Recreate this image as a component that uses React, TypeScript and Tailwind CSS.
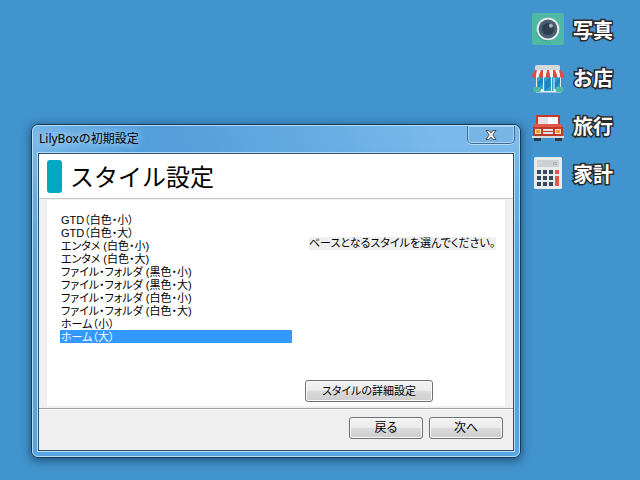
import { useState } from "react";

const styles = [
  "GTD（白色・小）",
  "GTD（白色・大）",
  "エンタメ (白色・小)",
  "エンタメ (白色・大)",
  "ファイル・フォルダ (黒色・小)",
  "ファイル・フォルダ (黒色・大)",
  "ファイル・フォルダ (白色・小)",
  "ファイル・フォルダ (白色・大)",
  "ホーム（小）",
  "ホーム（大）",
];

function CameraIcon() {
  return (
    <svg viewBox="0 0 32 32" className="size-8" aria-hidden="true">
      <rect width="32" height="32" rx="2.500" fill="#4fb9a3" />
      <path d="M4 19a12 12 0 0 0 15 9l-4-11z" fill="#41a38f" />
      <circle cx="16" cy="16" r="11.300" fill="#e9eced" />
      <circle cx="16" cy="16" r="9.400" fill="#4a5f70" />
      <circle cx="16" cy="16" r="6" fill="#2c3e50" />
      <circle cx="18.900" cy="12.700" r="2" fill="#a9b4bd" />
    </svg>
  );
}

function ShopIcon() {
  return (
    <svg viewBox="0 0 32 32" className="size-8" aria-hidden="true">
      <path d="M4 13h25v18.500H4z" fill="#e6e9ea" />
      <path d="M3 9V6q0-2 2-2h21q2 0 2 2v3z" fill="#d3d8db" />
      <path d="M5 15h6v13H5zM12 15h7v15h-7zM20 15h1.500v15H20zM22.500 15H28v13h-5.500z" fill="#2aa1cf" />
      <path d="M13 21l5-5v9l-5 5zM6 21l5-5v6l-5 5zM23 21l5-5v6l-5 5z" fill="#1d83ba" />
      <path d="M3 9h26l2 5H1z" fill="#f2f4f4" />
      <path
        d="M3 9h2l-1 5H0zM9 9h2l0 5H7zM15 9h2l1 5h-4zM21 9h2l2 5h-4zM27 9h2l3 5h-4z"
        fill="#df4b40"
      />
      <path
        d="M0 14h4v1a2 2 0 0 1-4 0zM7 14h4v1a2 2 0 0 1-4 0zM14 14h4v1a2 2 0 0 1-4 0zM21 14h4v1a2 2 0 0 1-4 0zM28 14h4v1a2 2 0 0 1-4 0z"
        fill="#df4b40"
      />
      <path
        d="M4 14h3v1a1.500 1.500 0 0 1-3 0zM11 14h3v1a1.500 1.500 0 0 1-3 0zM18 14h3v1a1.500 1.500 0 0 1-3 0zM25 14h3v1a1.500 1.500 0 0 1-3 0z"
        fill="#f2f4f4"
      />
      <rect x="1" y="26" width="8" height="5" rx="2" fill="#4fb9a3" />
      <rect x="23.500" y="26" width="8" height="5" rx="2" fill="#4fb9a3" />
    </svg>
  );
}

function CarIcon() {
  return (
    <svg viewBox="0 0 32 32" className="size-8" aria-hidden="true">
      <path d="M2 28h7v4H2zM23 28h7v4h-7z" fill="#2b3a46" />
      <path d="M4 6h24v11H4z" fill="#c93a2c" />
      <path d="M6 8h20v7H6z" fill="#dfe3e5" />
      <path d="M16 8h10v7H16z" fill="#fff" />
      <path d="M3 15h26l2 3v9H1v-9z" fill="#c0392b" />
      <path d="M3 15h26l2 3H1z" fill="#e2574c" />
      <path d="M3 20h6v5H3zM23 20h6v5h-6z" fill="#f7e3c0" />
      <path d="M4 21h4v3H4zM24 21h4v3h-4z" fill="#f0a030" />
      <path d="M11 20h10v2H11zM11 23h10v2H11z" fill="#e1e4e6" />
      <path d="M0 27h32v2H0z" fill="#d5d9dc" />
    </svg>
  );
}

function CalculatorIcon() {
  return (
    <svg viewBox="0 0 32 32" className="size-8" aria-hidden="true">
      <rect x="2" width="28" height="32" rx="1.500" fill="#e9ecec" />
      <path d="M5 3h22v7H5z" fill="#cdd1d3" />
      <path d="M21.500 5.500h3v2h-3z" fill="none" stroke="#a9afb3" />
      <path
        d="M5 13h4v4H5zM11 13h4v4h-4zM17 13h4v4h-4zM5 19h4v4H5zM11 19h4v4h-4zM17 19h4v4h-4zM5 25h4v4H5zM11 25h4v4h-4zM17 25h4v4h-4z"
        fill="#34495e"
      />
      <path d="M23 13h4v4h-4zM23 19h4v10h-4z" fill="#e2574c" />
    </svg>
  );
}

const shortcuts = [
  { label: "写真", Icon: CameraIcon },
  { label: "お店", Icon: ShopIcon },
  { label: "旅行", Icon: CarIcon },
  { label: "家計", Icon: CalculatorIcon },
];

const buttonClass =
  "flex h-[22px] items-center justify-center rounded-[3px] border border-[#707070] bg-[linear-gradient(#f3f3f3,#ebebeb_48%,#dadada_52%,#cdcdcd)] leading-none text-black shadow-[inset_0_0_0_1px_#fafafa] [font-feature-settings:'palt']";

export default function App() {
  const [selected, setSelected] = useState(styles[9]);

  return (
    <main className="flex min-h-screen items-start gap-[11px] bg-[#4294cf] pl-[31px] font-['Liberation_Sans','Noto_Sans_CJK_JP',sans-serif] text-black">
      {/* Setup window */}
      <section
        aria-labelledby="window-title"
        className="mt-[124px] min-w-0 flex-1 rounded-[7px] border border-[#173a54] shadow-[0_2px_10px_1px_rgba(0,20,45,0.5)]"
      >
        <div className="rounded-md border border-[#b4dcf7] bg-[linear-gradient(transparent_20px,#58a5e0_120px),linear-gradient(70deg,#6fb4e9_0%,#7ab9ea_18%,#529fdc_34%,#559fdb_44%,#68aee4_68%,#7ab9ea_86%,#7ab9ea_100%)] px-1 pb-1">
          <div className="flex h-[26px] items-start justify-between">
            <h1
              id="window-title"
              className="pt-1 pl-0.5 font-['Noto_Sans','Noto_Sans_CJK_JP',sans-serif] text-xs leading-[18px] [text-shadow:0_0_8px_#b5d8f4,0_0_8px_#b5d8f4]"
            >
              LilyBoxの初期設定
            </h1>
            <button
              type="button"
              aria-label="閉じる"
              className="flex h-[18px] w-12 items-center justify-center rounded-b-[5px] border border-t-0 border-[#3f6f97] bg-[#78b5e5] shadow-[inset_0_0_0_1px_#a6d2f3,0_1px_0_#b4dcf7]"
            >
              <svg viewBox="0 0 12 10" className="h-2.5 w-3" aria-hidden="true">
                <path
                  d="M1 .5h3L6 3l2-2.500h3L7.800 5 11 9.500H8L6 7 4 9.500H1L4.200 5z"
                  fill="#f4f4f4"
                  stroke="#4a5563"
                />
              </svg>
            </button>
          </div>

          <div className="border border-[#b4dcf7]">
            <div className="border border-[#2f4f68] bg-[#efefef]">
              <header className="flex h-[45px] items-center gap-2 border-b border-[#c8c8c8] bg-white pl-2">
                <span className="h-[33px] w-[15px] rounded-[3px] bg-[#00a8c0]" />
                <h2 className="font-['Noto_Sans_CJK_JP',sans-serif] text-2xl leading-8">スタイル設定</h2>
              </header>

              {/* Style list and hint */}
              <div className="mx-2 mt-px flex h-[206px] bg-white pt-[13px] pr-[9px] pb-1 pl-[13px]">
                <select
                  size={10}
                  aria-label="スタイル"
                  value={selected}
                  onChange={(e) => setSelected(e.target.value)}
                  className="h-[130px] w-[232px] shrink-0 overflow-hidden bg-white text-[11px] outline-none [font-feature-settings:'palt']"
                >
                  {styles.map((style) => (
                    <option
                      key={style}
                      value={style}
                      className="flex h-[13px] min-h-0 items-center px-px pt-0 pb-0.5 checked:bg-[linear-gradient(#3399ff,#3399ff)] checked:[-webkit-text-fill-color:#fff]"
                    >
                      {style}
                    </option>
                  ))}
                </select>
                <div className="ml-[13px] flex min-w-0 flex-1 flex-col items-start justify-between pt-6">
                  <p className="ml-1 self-stretch bg-[#efefef] text-[11px] leading-[13px] whitespace-nowrap [font-feature-settings:'palt']">
                    ベースとなるスタイルを選んでください。
                  </p>
                  <button type="button" className={`${buttonClass} w-32 text-[11px]`}>
                    スタイルの詳細設定
                  </button>
                </div>
              </div>

              {/* Wizard navigation */}
              <footer className="mt-0.5 flex h-[42px] justify-end gap-1.5 border-t border-[#a0a0a0] pt-2 pr-2.5 shadow-[inset_0_1px_0_#fff]">
                <button type="button" className={`${buttonClass} w-[74px] text-xs`}>
                  戻る
                </button>
                <button type="button" className={`${buttonClass} w-[74px] text-xs`}>
                  次へ
                </button>
              </footer>
            </div>
          </div>
        </div>
      </section>

      {/* Desktop shortcuts */}
      <nav className="flex w-[108px] shrink-0 flex-col gap-4 pt-[13px]">
        {shortcuts.map(({ label, Icon }) => (
          <a key={label} href="#" className="flex h-8 items-center gap-[9px]">
            <Icon />
            <span className="pt-0.5 font-['Noto_Sans_CJK_JP',sans-serif] text-xl leading-8 font-bold text-white [paint-order:stroke_fill] [-webkit-text-stroke:3px_#2b2b2b]">
              {label}
            </span>
          </a>
        ))}
      </nav>
    </main>
  );
}
